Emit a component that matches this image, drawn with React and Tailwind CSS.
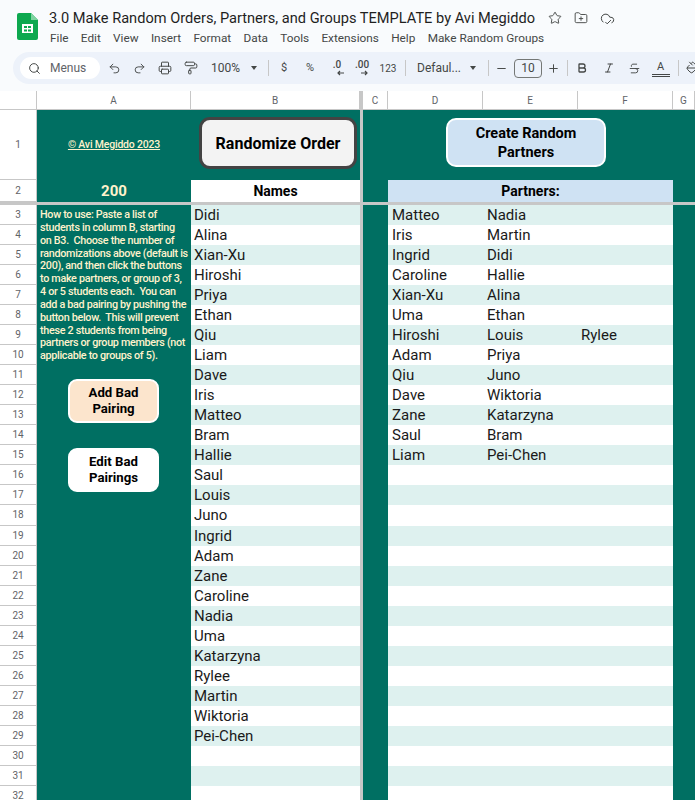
import React from "react";
import { Search, Undo2, Redo2, Printer, PaintRoller, Star, FolderPlus, CloudCheck, Minus, Plus, Bold, Italic, Strikethrough, PaintBucket } from "lucide-react";

const names = ["Didi","Alina","Xian-Xu","Hiroshi","Priya","Ethan","Qiu","Liam","Dave","Iris","Matteo","Bram","Hallie","Saul","Louis","Juno","Ingrid","Adam","Zane","Caroline","Nadia","Uma","Katarzyna","Rylee","Martin","Wiktoria","Pei-Chen","","",""];
const partners = [["Matteo","Nadia"],["Iris","Martin"],["Ingrid","Didi"],["Caroline","Hallie"],["Xian-Xu","Alina"],["Uma","Ethan"],["Hiroshi","Louis","Rylee"],["Adam","Priya"],["Qiu","Juno"],["Dave","Wiktoria"],["Zane","Katarzyna"],["Saul","Bram"],["Liam","Pei-Chen"]];
const help = ["How to use: Paste a list of","students in column B, starting","on B3.  Choose the number of","randomizations above (default is","200), and then click the buttons","to make partners, or group of 3,","4 or 5 students each.  You can","add a bad pairing by pushing the","button below.  This will prevent","these 2 students from being","partners or group members (not","applicable to groups of 5)."];
const menus = ["File","Edit","View","Insert","Format","Data","Tools","Extensions","Help","Make Random Groups"];

const Ico = ({ children, w = "w-[25px]" }) => <div className={`${w} shrink-0 flex items-center justify-center text-[#444746]`}>{children}</div>;
const Sep = () => <div className="w-px h-[16px] bg-[#c7c7c7] shrink-0" />;

function ColHead({ children }) {
  return <div className="flex items-center justify-center border-r border-b border-[#c7c7c7] bg-white text-[10px] text-[#5f6368]">{children}</div>;
}
function RowNum({ children }) {
  return <div className="flex items-center justify-center border-r border-b border-[#c7c7c7] bg-white text-[10px] text-[#5f6368]">{children}</div>;
}

export default function App() {
  return (
    <div className="w-[695px] h-[800px] overflow-hidden flex flex-col bg-white font-['Roboto',sans-serif] text-black">
      <div className="h-[91px] shrink-0 bg-[#f9fbfd] flex flex-col">
        <div className="h-[52px] shrink-0 flex">
          <div className="w-[49px] shrink-0 pl-[17px] pt-[13px]">
            <svg width="21" height="27" viewBox="0 0 21 27">
              <path d="M2 0H14L21 7V25a2 2 0 0 1-2 2H2a2 2 0 0 1-2-2V2a2 2 0 0 1 2-2z" fill="#0da84f" />
              <path d="M14 0L21 7H14z" fill="#7fd3a0" />
              <path d="M5 11H16V20H5z" fill="#fff" />
              <path d="M7 13H10V15H7zM11 13H14V15H11zM7 16.5H10V18.500H7zM11 16.500H14V18.500H11z" fill="#0da84f" />
            </svg>
          </div>
          <div className="flex flex-col pt-[8px]">
            <div className="flex items-center h-[20px]">
              <span className="text-[14.6px] leading-[20px] text-[#1f1f1f] whitespace-nowrap w-[493px]">3.0 Make Random Orders, Partners, and Groups TEMPLATE by Avi Megiddo</span>
              <Ico w="w-[26px]"><Star size={14} strokeWidth={1.6} /></Ico>
              <Ico w="w-[26px]"><FolderPlus size={14} strokeWidth={1.6} /></Ico>
              <Ico w="w-[26px]"><CloudCheck size={15} strokeWidth={1.6} /></Ico>
            </div>
            <div className="flex gap-[12.3px] mt-[1px] text-[11.8px] leading-[18px] text-[#444746] pl-[1px] whitespace-nowrap">
              {menus.map((m) => <span key={m}>{m}</span>)}
            </div>
          </div>
        </div>
        <div className="h-[32px] ml-[13px] rounded-l-[16px] bg-[#edf2fa] flex items-center pl-[7px] overflow-hidden text-[#444746]">
          <div className="w-[80px] h-[22px] shrink-0 rounded-full bg-white flex items-center pl-[8px] gap-[9px]">
            <Search size={13} strokeWidth={1.8} />
            <span className="text-[12px] text-[#5f6368]">Menus</span>
          </div>
          <div className="w-[2px] shrink-0" />
          <Ico><Undo2 size={13} strokeWidth={1.7} /></Ico>
          <Ico><Redo2 size={13} strokeWidth={1.7} /></Ico>
          <Ico w="w-[26px]"><Printer size={14} strokeWidth={1.7} /></Ico>
          <Ico><PaintRoller size={14} strokeWidth={1.7} /></Ico>
          <span className="text-[12px] w-[37px] text-right shrink-0">100%</span>
          <div className="w-[14px] shrink-0 ml-[7px] flex justify-center"><div className="border-x-[3.5px] border-x-transparent border-t-[4px] border-t-[#444746]" /></div>
          <div className="w-[7px] shrink-0" />
          <Sep />
          <div className="w-[26px] ml-[2px] text-center text-[11px] shrink-0">$</div>
          <div className="w-[26px] text-center text-[11px] shrink-0">%</div>
          <div className="w-[28px] shrink-0 flex flex-col items-center leading-none text-[10px] font-medium">
            <span className="h-[10px]">.0</span>
            <svg width="9" height="6" viewBox="0 0 9 6" className="ml-[6px]"><path d="M8 3H2M4 1L2 3l2 2" fill="none" stroke="#444746" strokeWidth="1.2" /></svg>
          </div>
          <div className="w-[22px] shrink-0 flex flex-col items-center leading-none text-[10px] font-medium">
            <span className="h-[10px]">.00</span>
            <svg width="9" height="6" viewBox="0 0 9 6" className="ml-[4px]"><path d="M1 3H7M5 1l2 2-2 2" fill="none" stroke="#444746" strokeWidth="1.2" /></svg>
          </div>
          <div className="w-[28px] ml-[1px] text-center text-[10px] shrink-0">123</div>
          <div className="w-[3px] shrink-0" />
          <Sep />
          <span className="ml-[11px] w-[49px] text-[12px] shrink-0 whitespace-nowrap">Defaul...</span>
          <div className="w-[14px] shrink-0 flex justify-center"><div className="border-x-[3.5px] border-x-transparent border-t-[4px] border-t-[#444746]" /></div>
          <div className="w-[8px] shrink-0" />
          <Sep />
          <Ico><Minus size={13} strokeWidth={1.8} /></Ico>
          <div className="w-[28px] h-[19px] shrink-0 border border-[#747775] rounded-[4px] flex items-center justify-center text-[12px]">10</div>
          <Ico w="w-[23px]"><Plus size={13} strokeWidth={1.8} /></Ico>
          <div className="w-[2px] shrink-0" />
          <Sep />
          <Ico w="w-[28px]"><Bold size={12} strokeWidth={2.6} /></Ico>
          <Ico w="w-[25px]"><Italic size={12} strokeWidth={2} /></Ico>
          <Ico w="w-[27px]"><Strikethrough size={13} strokeWidth={1.7} /></Ico>
          <div className="w-[25px] shrink-0 flex flex-col items-center">
            <span className="text-[11px] leading-[13px] h-[14px]">A</span>
            <div className="w-[18px] h-[3px] border-y border-[#444746]" />
          </div>
          <div className="w-[5px] shrink-0" />
          <Sep />
          <Ico w="w-[28px]"><PaintBucket size={14} strokeWidth={1.7} /></Ico>
        </div>
      </div>

      <div className="grid grid-cols-[37px_154px_169px_3px_25px_95px_95px_95px_22px] grid-rows-[19px_70px_22px_3px_repeat(30,20.04px)] flex-1 min-h-0">
        <div className="col-start-4 row-[1/-1] bg-[#c7c7c7]" />
        <div className="col-[1/-1] row-start-4 bg-[#c7c7c7]" />

        <div className="border-r border-b border-[#c7c7c7] bg-white" />
        <ColHead>A</ColHead>
        <ColHead>B</ColHead>
        <ColHead>C</ColHead>
        <ColHead>D</ColHead>
        <ColHead>E</ColHead>
        <ColHead>F</ColHead>
        <ColHead>G</ColHead>

        <RowNum>1</RowNum>
        <div className="bg-[#006f62] flex items-center justify-center">
          <span className="text-[10.5px] tracking-[-0.2px] font-medium text-[#fff2cc] underline">© Avi Megiddo 2023</span>
        </div>
        <div className="bg-[#006f62] flex justify-end pr-[3px] pt-[7px]">
          <div className="w-[158px] h-[52px] pt-[2px] rounded-[11px] border-[3.5px] border-[#434343] bg-[#f3f3f3] flex items-center justify-center text-[16px] font-bold">Randomize Order</div>
        </div>
        <div className="col-[5/-1] bg-[#006f62] flex pt-[8px] pl-[83px]">
          <div className="w-[160px] h-[49px] pt-[2px] rounded-[10px] border-2 border-white bg-[#cfe2f3] flex items-center justify-center text-center text-[14.500px] leading-[18.500px] font-bold">Create Random<br />Partners</div>
        </div>

        <RowNum>2</RowNum>
        <div className="bg-[#006f62] flex items-center justify-center text-[15px] font-bold text-[#fff2cc]">200</div>
        <div className="bg-white flex items-center justify-center text-[14px] font-bold">Names</div>
        <div className="bg-[#006f62]" />
        <div className="col-span-3 bg-[#cfe2f3] flex items-center justify-center text-[14px] font-bold">Partners:</div>
        <div className="bg-[#006f62]" />

        <div className="col-start-2 row-start-5 row-span-30 bg-[#006f62] flex flex-col">
          <div className="pl-[3px] pt-[4px] text-[10.8px] tracking-[-0.32px] leading-[12.85px] font-medium text-[#fff2cc] whitespace-pre">
            {help.map((l) => <div key={l}>{l}</div>)}
          </div>
          <div className="mt-[16px] ml-[31px] w-[91px] h-[44px] rounded-[9px] border-2 border-white bg-[#fce5cd] flex items-center justify-center text-center text-[13.200px] leading-[16px] font-bold">Add Bad<br />Pairing</div>
          <div className="mt-[25px] ml-[31px] w-[91px] h-[44px] rounded-[9px] border-2 border-white bg-white flex items-center justify-center text-center text-[13.200px] leading-[16px] font-bold">Edit Bad<br />Pairings</div>
        </div>
        <div className="col-start-5 row-start-5 row-span-30 bg-[#006f62]" />
        <div className="col-start-9 row-start-5 row-span-30 bg-[#006f62]" />

        {names.map((n, i) => {
          const bg = i % 2 === 0 ? "bg-[#def1ef]" : "bg-white";
          const p = partners[i] || [];
          return (
            <React.Fragment key={i}>
              <RowNum>{i + 3}</RowNum>
              <div className={`${bg} pl-[3px] text-[15px] leading-[20px] text-[#1a1a1a]`}>{n}</div>
              <div className={`${bg} pl-[4px] text-[15px] leading-[20px] text-[#1a1a1a]`}>{p[0]}</div>
              <div className={`${bg} pl-[4px] text-[15px] leading-[20px] text-[#1a1a1a]`}>{p[1]}</div>
              <div className={`${bg} pl-[3px] text-[15px] leading-[20px] text-[#1a1a1a]`}>{p[2]}</div>
            </React.Fragment>
          );
        })}
      </div>
    </div>
  );
}
